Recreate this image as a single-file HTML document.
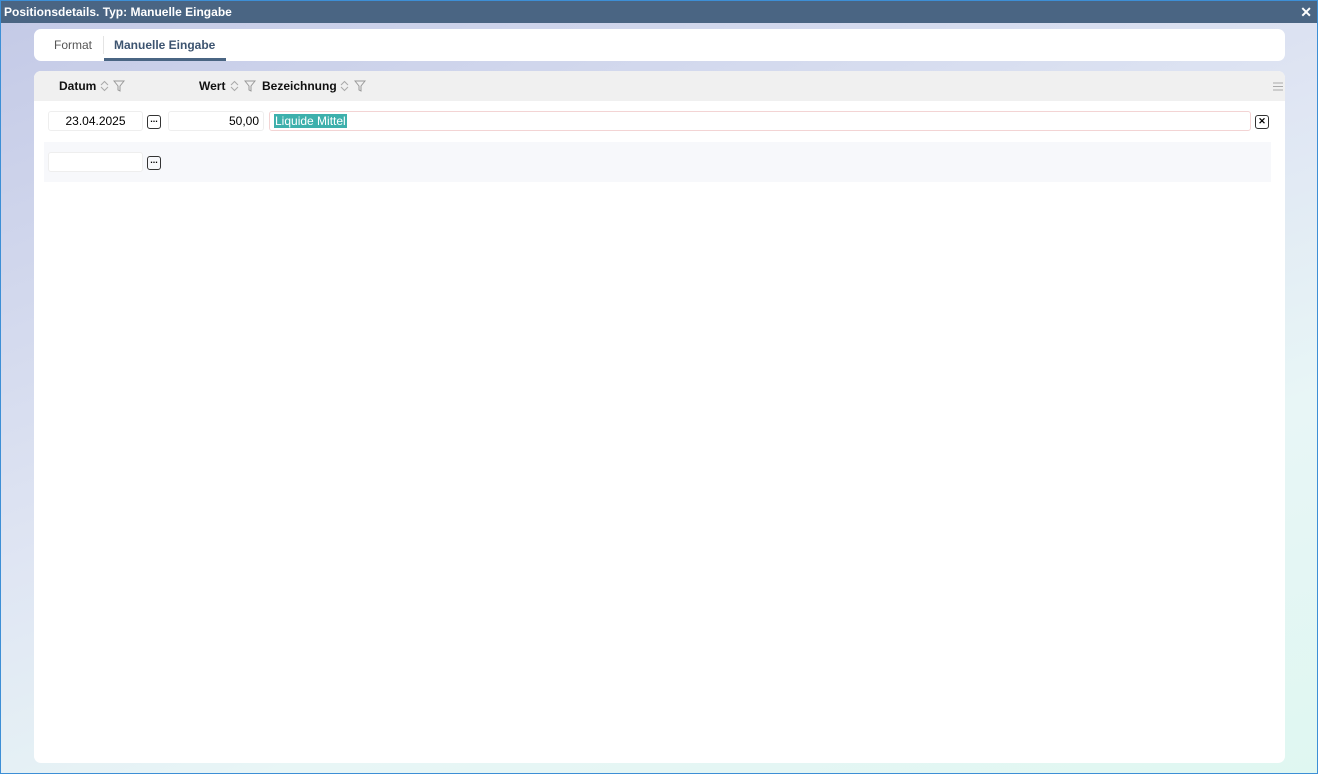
<!DOCTYPE html>
<html><head><style>
*{box-sizing:border-box;margin:0;padding:0}
body{width:1318px;height:774px;position:relative;overflow:hidden;font-family:"Liberation Sans",Arial,sans-serif;font-size:12px;background:#fff}
.win{position:absolute;left:0;top:0;width:1318px;height:774px;border:1px solid #3d8fd6;background:linear-gradient(160deg,#c3c9e6 0%,#dfe5f3 45%,#e8f6f6 70%,#dff7f1 100%)}
.title{position:absolute;left:0;top:0;width:1316px;height:22px;background:#4a6583;color:#fff;font-weight:bold;font-size:12px;line-height:23px;padding-left:3px}
.close{position:absolute;right:5px;top:0;color:#fff;font-size:14px;font-weight:bold}
.tabs{position:absolute;left:33px;top:28px;width:1251px;height:32px;background:#fff;border-radius:7px}
.tab{position:absolute;top:9px;font-size:12px}
.grid{position:absolute;left:33px;top:70px;width:1251px;height:692px;background:#fff;border-radius:7px;overflow:hidden}
.hdr{position:absolute;left:0;top:0;width:100%;height:30px;background:#f0f0f0}
.h{position:absolute;top:8px;font-weight:bold;font-size:12px;color:#111}
.ic{position:absolute}
.inp{position:absolute;height:20px;border:1px solid #eee;border-radius:3px;background:#fff;font-size:12px;line-height:18px}
.dots{position:absolute;width:14px;height:14px;border:1.5px solid #333;border-radius:3px;font-size:9px;line-height:6px;text-align:center;font-weight:bold}
</style></head><body>
<div class="win">
<div class="title">Positionsdetails. Typ: Manuelle Eingabe<span class="close">✕</span></div>
<div class="tabs">
<div class="tab" style="left:20px;color:#555">Format</div>
<div style="position:absolute;left:69px;top:7px;width:1px;height:18px;background:#e4e4e4"></div>
<div class="tab" style="left:80px;color:#3d5470;font-weight:bold">Manuelle Eingabe</div>
<div style="position:absolute;left:70px;top:29px;width:122px;height:3px;background:#4a6583"></div>
</div>
<div class="grid">
<div class="hdr">
<div class="h" style="left:25px">Datum</div>
<svg class="ic" style="left:66px;top:9px" width="9" height="12" viewBox="0 0 9 12"><path d="M1 5L4.5 1.5L8 5M1 7L4.5 10.5L8 7" fill="none" stroke="#aaa"/></svg>
<svg class="ic" style="left:79px;top:9px" width="12" height="12" viewBox="0 0 12 12"><path d="M1 1H11L7 6V11L5 10V6Z" fill="none" stroke="#999"/></svg>
<div class="h" style="left:165px">Wert</div>
<svg class="ic" style="left:196px;top:9px" width="9" height="12" viewBox="0 0 9 12"><path d="M1 5L4.5 1.5L8 5M1 7L4.5 10.5L8 7" fill="none" stroke="#aaa"/></svg>
<svg class="ic" style="left:210px;top:9px" width="12" height="12" viewBox="0 0 12 12"><path d="M1 1H11L7 6V11L5 10V6Z" fill="none" stroke="#999"/></svg>
<div class="h" style="left:228px">Bezeichnung</div>
<svg class="ic" style="left:306px;top:9px" width="9" height="12" viewBox="0 0 9 12"><path d="M1 5L4.5 1.5L8 5M1 7L4.5 10.5L8 7" fill="none" stroke="#aaa"/></svg>
<svg class="ic" style="left:320px;top:9px" width="12" height="12" viewBox="0 0 12 12"><path d="M1 1H11L7 6V11L5 10V6Z" fill="none" stroke="#999"/></svg>
<svg style="position:absolute;left:1239px;top:11px" width="10" height="9"><path d="M0 1H10M0 4.5H10M0 8H10" stroke="#aaa"/></svg>
</div>
<div class="inp" style="left:14px;top:40px;width:95px;text-align:center">23.04.2025</div>
<div class="dots" style="left:113px;top:44px">...</div>
<div class="inp" style="left:134px;top:40px;width:96px;text-align:right;padding-right:4px">50,00</div>
<div class="inp" style="left:235px;top:40px;width:982px;border-color:#f3d4d4;padding-left:4px"><span style="background:#3eb0ac;color:#fff;padding:0 1px">Liquide Mittel</span></div>
<div class="dots" style="left:1221px;top:44px;line-height:10px;font-size:9px">✕</div>
<div style="position:absolute;left:10px;top:71px;width:1227px;height:40px;background:#f7f8fb"></div>
<div class="inp" style="left:14px;top:81px;width:95px"></div>
<div class="dots" style="left:113px;top:85px">...</div>
</div>
</div>
</body></html>
